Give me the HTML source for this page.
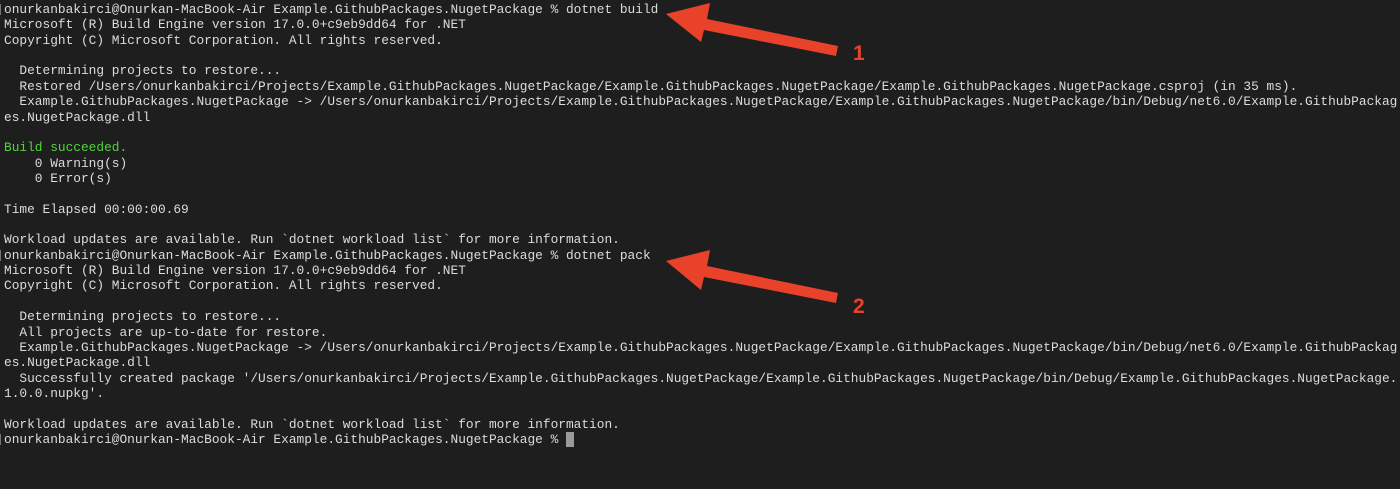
<!DOCTYPE html>
<html><head><meta charset="utf-8"><style>
html,body{margin:0;padding:0;background:#1e1e1e;width:1400px;height:489px;overflow:hidden}
pre{margin:0;position:absolute;left:4px;top:2px;font-family:"Liberation Mono",monospace;font-size:12.83px;line-height:15.36px;color:#dcdcdc;white-space:pre}
.g{color:#53d33c}
.cur{background:#9a9a9a;color:#9a9a9a}
.br{position:absolute;left:0;width:2px;height:11px;border-left:1px solid #777}
svg{position:absolute;left:0;top:0}
</style></head><body>
<pre>onurkanbakirci@Onurkan-MacBook-Air Example.GithubPackages.NugetPackage % dotnet build
Microsoft (R) Build Engine version 17.0.0+c9eb9dd64 for .NET
Copyright (C) Microsoft Corporation. All rights reserved.

  Determining projects to restore...
  Restored /Users/onurkanbakirci/Projects/Example.GithubPackages.NugetPackage/Example.GithubPackages.NugetPackage/Example.GithubPackages.NugetPackage.csproj (in 35 ms).
  Example.GithubPackages.NugetPackage -&gt; /Users/onurkanbakirci/Projects/Example.GithubPackages.NugetPackage/Example.GithubPackages.NugetPackage/bin/Debug/net6.0/Example.GithubPackag
es.NugetPackage.dll

<span class="g">Build succeeded.</span>
    0 Warning(s)
    0 Error(s)

Time Elapsed 00:00:00.69

Workload updates are available. Run `dotnet workload list` for more information.
onurkanbakirci@Onurkan-MacBook-Air Example.GithubPackages.NugetPackage % dotnet pack
Microsoft (R) Build Engine version 17.0.0+c9eb9dd64 for .NET
Copyright (C) Microsoft Corporation. All rights reserved.

  Determining projects to restore...
  All projects are up-to-date for restore.
  Example.GithubPackages.NugetPackage -&gt; /Users/onurkanbakirci/Projects/Example.GithubPackages.NugetPackage/Example.GithubPackages.NugetPackage/bin/Debug/net6.0/Example.GithubPackag
es.NugetPackage.dll
  Successfully created package '/Users/onurkanbakirci/Projects/Example.GithubPackages.NugetPackage/Example.GithubPackages.NugetPackage/bin/Debug/Example.GithubPackages.NugetPackage.
1.0.0.nupkg'.

Workload updates are available. Run `dotnet workload list` for more information.
onurkanbakirci@Onurkan-MacBook-Air Example.GithubPackages.NugetPackage % <span class="cur">_</span></pre>
<div class="br" style="top:4px"></div>
<div class="br" style="top:250px"></div>
<div class="br" style="top:434px"></div>
<svg width="1400" height="489">
<g fill="#e8432a">
<polygon points="666,14 710,3 707,19 838,46 836,56 704,30 701,42"/>
<polygon points="666,261 710,250 707,266 838,293 836,303 704,277 701,290"/>
</g>
<g fill="#e8432a" font-family="Liberation Sans, sans-serif" font-weight="bold" font-size="21px">
<text x="853" y="60">1</text>
<text x="853" y="313">2</text>
</g>
</svg>
</body></html>
